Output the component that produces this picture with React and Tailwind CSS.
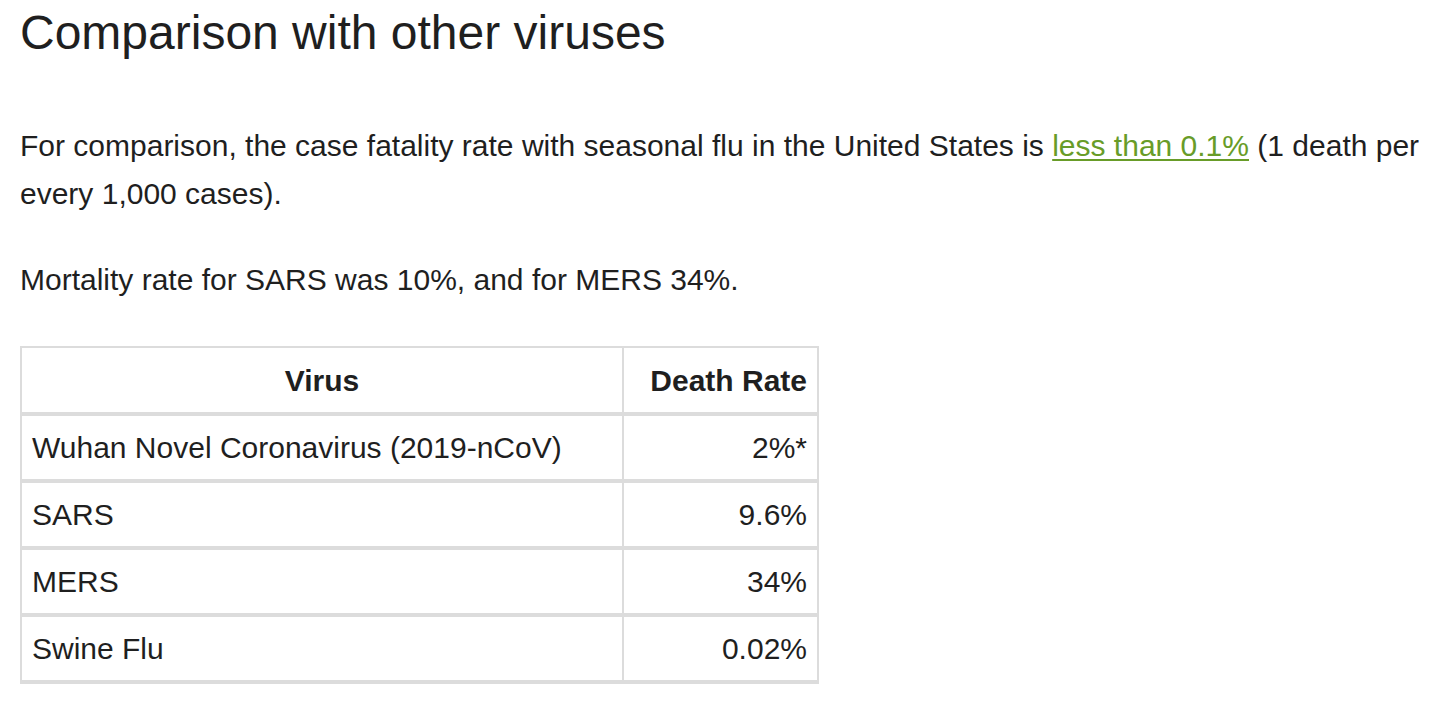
const rows = [
  ['Wuhan Novel Coronavirus (2019-nCoV)', '2%*'],
  ['SARS', '9.6%'],
  ['MERS', '34%'],
  ['Swine Flu', '0.02%'],
];

export default function App() {
  return (
    <div className="min-h-screen bg-white px-5 text-[#1f1f1f] font-['Liberation_Sans',Arial,sans-serif]">
      <h1 className="pt-1 text-[48px] leading-[58px] font-normal">Comparison with other viruses</h1>

      <p className="mt-[60px] text-[30px] leading-[48px]">
        For comparison, the case fatality rate with seasonal flu in the United States is{' '}
        <a href="#" className="text-[#689c28] underline decoration-2 underline-offset-[3px]">less than 0.1%</a>{' '}
        (1 death per every 1,000 cases).
      </p>

      <p className="mt-[38px] text-[30px] leading-[48px]">Mortality rate for SARS was 10%, and for MERS 34%.</p>

      <table className="mt-[42px] w-[799px] border-collapse border-x-2 border-t-2 border-[#dcdcdc] text-[30px]">
        <thead>
          <tr className="border-b-4 border-[#dcdcdc]">
            <th className="h-[67px] w-[602px] border-r-2 border-[#dcdcdc] px-[10px] text-center font-bold">Virus</th>
            <th className="h-[67px] px-[10px] text-right font-bold">Death Rate</th>
          </tr>
        </thead>
        <tbody>
          {rows.map(([name, rate]) => (
            <tr key={name} className="border-b-4 border-[#dcdcdc]">
              <td className="h-[67px] border-r-2 border-[#dcdcdc] px-[10px] text-left">{name}</td>
              <td className="h-[67px] px-[10px] text-right">{rate}</td>
            </tr>
          ))}
        </tbody>
      </table>
    </div>
  );
}
